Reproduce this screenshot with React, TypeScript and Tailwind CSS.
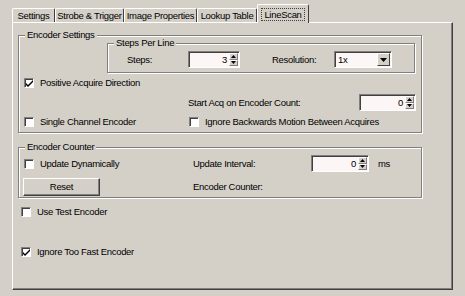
import type { ReactNode } from 'react'

function Check({ checked = false }: { checked?: boolean }) {
  return (
    <div className="relative w-[10px] h-[10px] shrink-0 bg-white border border-t-[#808080] border-l-[#808080] border-r-white border-b-white shadow-[inset_1px_1px_0_#404040]">
      {checked && (
        <svg className="absolute left-[1px] top-[1px]" width="7" height="7" viewBox="0 0 7 7">
          <path d="M0 3 L0 5 L2 7 L7 2 L7 0 L2 5 Z" fill="#000" />
        </svg>
      )}
    </div>
  )
}

function CheckRow({ checked, label, className = '' }: { checked?: boolean; label: string; className?: string }) {
  return (
    <div className={`flex items-center ${className}`}>
      <Check checked={checked} />
      <span className="ml-[6px] whitespace-nowrap">{label}</span>
    </div>
  )
}

function Spinner() {
  return (
    <div className="flex flex-col w-[9px] h-full shrink-0">
      {[0, 1].map((i) => (
        <div
          key={i}
          className="flex-1 flex items-center justify-center bg-[#d4d0c8] border border-t-white border-l-white border-r-[#808080] border-b-[#808080]"
        >
          <svg width="5" height="3" viewBox="0 0 5 3">
            <path d={i === 0 ? 'M2.5 0 L5 3 L0 3 Z' : 'M0 0 L5 0 L2.5 3 Z'} fill="#000" />
          </svg>
        </div>
      ))}
    </div>
  )
}

function SpinBox({ value, width }: { value: string; width: string }) {
  return (
    <div className={`flex h-[17px] ${width} bg-[#fdf6f6] border border-t-[#808080] border-l-[#808080] border-r-white border-b-white shadow-[inset_1px_1px_0_#404040]`}>
      <div className="flex-1 flex items-center justify-end pr-[2px] pt-[1px]">{value}</div>
      <div className="py-[1px] pr-[1px]">
        <Spinner />
      </div>
    </div>
  )
}

function Group({ title, className, children }: { title: string; className: string; children: ReactNode }) {
  return (
    <div className={`relative border border-[#808080] shadow-[inset_1px_1px_0_#fff,1px_1px_0_#fff] ${className}`}>
      <span className="absolute -top-[7px] left-[6px] bg-[#d4d0c8] px-[2px] leading-[12px]">{title}</span>
      {children}
    </div>
  )
}

const tabs = [
  { name: 'Settings', w: 'w-[43px]' },
  { name: 'Strobe & Trigger', w: 'w-[69px]' },
  { name: 'Image Properties', w: 'w-[73px]' },
  { name: 'Lookup Table', w: 'w-[60px]' },
]

export default function App() {
  return (
    <div
      className="w-[465px] h-[296px] bg-[#d4d0c8] text-black text-[9.5px] tracking-[-0.3px] leading-[12px] pl-[12px] pt-[4px] overflow-hidden"
      style={{ fontFamily: '"Liberation Sans", Arial, sans-serif' }}
    >
      {/* tab strip */}
      <div className="flex items-end h-[18px]">
        {tabs.map((t) => (
          <div
            key={t.name}
            className={`${t.w} h-[14px] flex items-center justify-center border-t border-l border-white border-r border-r-[#404040] rounded-t-[2px] whitespace-nowrap`}
          >
            {t.name}
          </div>
        ))}
        <div className="relative z-10 w-[52px] h-[19px] -mb-[1px] bg-[#d4d0c8] flex items-start justify-center pt-[3px] border-t border-l border-white border-r border-r-[#404040] rounded-t-[2px]">
          <span className="border border-dotted border-[#404040] px-[2px] leading-[11px]">LineScan</span>
        </div>
      </div>

      {/* tab page */}
      <div className="w-[441px] h-[268px] border-t border-l border-white border-r border-b border-r-[#404040] border-b-[#404040] shadow-[inset_-1px_-1px_0_#808080] pt-[12px] pl-[5px]">
        <Group title="Encoder Settings" className="w-[404px] h-[98px]">
          <Group title="Steps Per Line" className="w-[308px] h-[30px] mt-[7px] ml-[88px]">
            <div className="flex items-center h-[17px] mt-[7px] pl-[19px]">
              <span className="w-[61px]">Steps:</span>
              <SpinBox value="3" width="w-[52px]" />
              <span className="w-[62px] ml-[32px]">Resolution:</span>
              <div className="flex w-[58px] h-[17px] bg-[#fdf6f6] border border-t-[#808080] border-l-[#808080] border-r-white border-b-white shadow-[inset_1px_1px_0_#404040]">
                <div className="flex-1 flex items-center pl-[3px] pt-[1px]">1x</div>
                <div className="py-[1px] pr-[1px]">
                  <div className="w-[13px] h-full flex items-center justify-center bg-[#d4d0c8] border border-t-white border-l-white border-r-[#404040] border-b-[#404040]">
                    <svg width="7" height="4" viewBox="0 0 7 4">
                      <path d="M0 0 L7 0 L3.5 4 Z" fill="#000" />
                    </svg>
                  </div>
                </div>
              </div>
            </div>
          </Group>

          <CheckRow checked label="Positive Acquire Direction" className="h-[10px] mt-[5px] ml-[5px]" />

          <div className="flex items-center h-[17px] mt-[6px] pl-[169px]">
            <span className="w-[171px]">Start Acq on Encoder Count:</span>
            <SpinBox value="0" width="w-[57px]" />
          </div>

          <div className="flex items-center h-[10px] mt-[6px] ml-[5px]">
            <CheckRow label="Single Channel Encoder" className="w-[165px]" />
            <CheckRow label="Ignore Backwards Motion Between Acquires" />
          </div>
        </Group>

        <Group title="Encoder Counter" className="w-[404px] h-[51px] mt-[14px]">
          <div className="flex items-center h-[17px] mt-[7px] ml-[5px]">
            <CheckRow label="Update Dynamically" className="w-[169px]" />
            <span className="w-[118px]">Update Interval:</span>
            <SpinBox value="0" width="w-[58px]" />
            <span className="ml-[9px]">ms</span>
          </div>
          <div className="flex items-center h-[18px] mt-[6px] ml-[4px]">
            <div className="w-[77px] h-[18px] flex items-center justify-center bg-[#d4d0c8] border border-t-white border-l-white border-r-[#404040] border-b-[#404040] shadow-[inset_-1px_-1px_0_#808080]">
              Reset
            </div>
            <span className="ml-[93px]">Encoder Counter:</span>
          </div>
        </Group>

        <CheckRow label="Use Test Encoder" className="h-[10px] mt-[9px] ml-[3px]" />
        <CheckRow checked label="Ignore Too Fast Encoder" className="h-[10px] mt-[30px] ml-[3px]" />
      </div>
    </div>
  )
}
